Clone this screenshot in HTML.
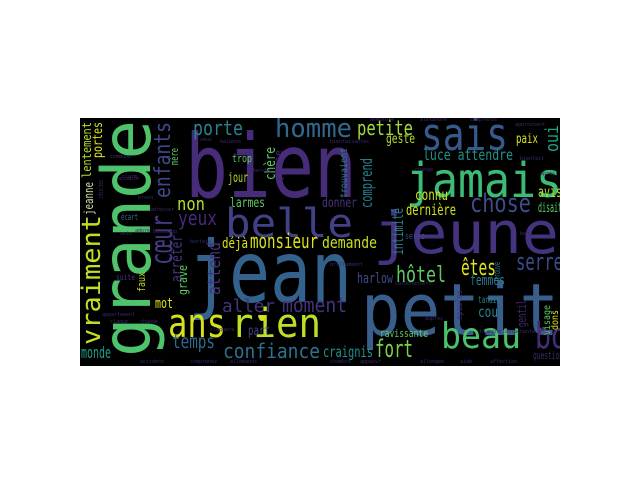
<!DOCTYPE html>
<html><head><meta charset="utf-8"><style>
html,body{margin:0;padding:0;background:#fff;width:640px;height:480px;overflow:hidden}
svg{display:block}
text{font-family:"DejaVu Sans Mono","Liberation Mono",monospace}
</style></head><body>
<svg width="640" height="480" viewBox="0 0 640 480" xmlns="http://www.w3.org/2000/svg">
<defs><clipPath id="c"><rect x="80" y="118" width="480" height="248"/></clipPath></defs>
<rect x="80" y="118" width="480" height="248" fill="#000"/>
<g clip-path="url(#c)" lengthAdjust="spacingAndGlyphs">
<!-- big horizontal -->
<text x="185" y="197" font-size="88" textLength="172" lengthAdjust="spacingAndGlyphs" fill="#472c7a">bien</text>
<text x="225" y="237" font-size="40" textLength="128" lengthAdjust="spacingAndGlyphs" fill="#424086">belle</text>
<text x="188" y="302" font-size="86" textLength="164" lengthAdjust="spacingAndGlyphs" fill="#33638d">jean</text>
<text x="168" y="337" font-size="40" textLength="58" lengthAdjust="spacingAndGlyphs" fill="#d5e21a">ans</text>
<text x="231" y="337" font-size="40" textLength="90" lengthAdjust="spacingAndGlyphs" fill="#bddf26">rien</text>
<text x="421" y="150" font-size="45" textLength="87" lengthAdjust="spacingAndGlyphs" fill="#38598c">sais</text>
<text x="406" y="197" font-size="48" textLength="156" lengthAdjust="spacingAndGlyphs" fill="#3bbb75">jamais</text>
<text x="373" y="253" font-size="58" textLength="186" lengthAdjust="spacingAndGlyphs" fill="#46337f">jeune</text>
<text x="361" y="335" font-size="72" textLength="198" lengthAdjust="spacingAndGlyphs" fill="#3a5e8c">petit</text>
<text x="441" y="348" font-size="36" textLength="80" lengthAdjust="spacingAndGlyphs" fill="#4ac16d">beau</text>
<text x="535" y="348" font-size="36" textLength="48" lengthAdjust="spacingAndGlyphs" fill="#472c7a">bon</text>
<text x="470" y="212" font-size="26" textLength="61" lengthAdjust="spacingAndGlyphs" fill="#3e4c8a">chose</text>
<text x="516" y="270" font-size="24" textLength="47" lengthAdjust="spacingAndGlyphs" fill="#3e4989">serre</text>
<!-- medium horizontal -->
<text x="193" y="135" font-size="20" textLength="50" lengthAdjust="spacingAndGlyphs" fill="#26828e">porte</text>
<text x="275" y="137" font-size="26" textLength="77" lengthAdjust="spacingAndGlyphs" fill="#31688e">homme</text>
<text x="357" y="135" font-size="20" textLength="56" lengthAdjust="spacingAndGlyphs" fill="#a0da39">petite</text>
<text x="177" y="210" font-size="18" textLength="28" lengthAdjust="spacingAndGlyphs" fill="#b5de2b">non</text>
<text x="178" y="225" font-size="20" textLength="39" lengthAdjust="spacingAndGlyphs" fill="#482878">yeux</text>
<text x="250" y="248" font-size="20" textLength="68" lengthAdjust="spacingAndGlyphs" fill="#d8e219">monsieur</text>
<text x="222" y="248" font-size="14" textLength="26" lengthAdjust="spacingAndGlyphs" fill="#d8e219">déjà</text>
<text x="322" y="248" font-size="16" textLength="55" lengthAdjust="spacingAndGlyphs" fill="#c9e020">demande</text>
<text x="230" y="207" font-size="13" textLength="35" lengthAdjust="spacingAndGlyphs" fill="#5ec962">larmes</text>
<text x="322" y="207" font-size="13" textLength="35" lengthAdjust="spacingAndGlyphs" fill="#46327e">donner</text>
<text x="228" y="182" font-size="13" textLength="20" lengthAdjust="spacingAndGlyphs" fill="#b5de2b">jour</text>
<text x="232" y="162" font-size="11" textLength="20" lengthAdjust="spacingAndGlyphs" fill="#5ec962">trop</text>
<text x="222" y="312" font-size="18" textLength="53" lengthAdjust="spacingAndGlyphs" fill="#46327e">aller</text>
<text x="282" y="312" font-size="20" textLength="65" lengthAdjust="spacingAndGlyphs" fill="#46327e">moment</text>
<text x="172" y="348" font-size="19" textLength="43" lengthAdjust="spacingAndGlyphs" fill="#31688e">temps</text>
<text x="223" y="358" font-size="20" textLength="97" lengthAdjust="spacingAndGlyphs" fill="#2c728e">confiance</text>
<text x="323" y="357" font-size="15" textLength="50" lengthAdjust="spacingAndGlyphs" fill="#21918c">craignis</text>
<text x="375" y="357" font-size="24" textLength="38" lengthAdjust="spacingAndGlyphs" fill="#7ad151">fort</text>
<text x="248" y="335" font-size="13" textLength="22" lengthAdjust="spacingAndGlyphs" fill="#414487">part</text>
<text x="357" y="283" font-size="14" textLength="36" lengthAdjust="spacingAndGlyphs" fill="#3e4a89">harlow</text>
<text x="396" y="282" font-size="22" textLength="50" lengthAdjust="spacingAndGlyphs" fill="#5ec962">hôtel</text>
<text x="155" y="308" font-size="14" textLength="18" lengthAdjust="spacingAndGlyphs" fill="#d8e219">mot</text>
<text x="81" y="358" font-size="16" textLength="30" lengthAdjust="spacingAndGlyphs" fill="#1f9e89">monde</text>
<text x="121" y="220" font-size="9" textLength="17" lengthAdjust="spacingAndGlyphs" fill="#31688e">écart</text>
<text x="116" y="280" font-size="8" textLength="19" lengthAdjust="spacingAndGlyphs" fill="#46327e">suite</text>
<text x="423" y="160" font-size="15" textLength="90" lengthAdjust="spacingAndGlyphs" fill="#21918c">luce attendre</text>
<text x="415" y="200" font-size="15" textLength="33" lengthAdjust="spacingAndGlyphs" fill="#d0e11c">connu</text>
<text x="406" y="215" font-size="15" textLength="50" lengthAdjust="spacingAndGlyphs" fill="#d0e11c">dernière</text>
<text x="461" y="275" font-size="22" textLength="35" lengthAdjust="spacingAndGlyphs" fill="#e2e418">êtes</text>
<text x="470" y="285" font-size="14" textLength="35" lengthAdjust="spacingAndGlyphs" fill="#2a788e">femmes</text>
<text x="478" y="303" font-size="10" textLength="22" lengthAdjust="spacingAndGlyphs" fill="#26828e">tandis</text>
<text x="478" y="317" font-size="15" textLength="20" lengthAdjust="spacingAndGlyphs" fill="#26828e">cou</text>
<text x="380" y="337" font-size="11" textLength="48" lengthAdjust="spacingAndGlyphs" fill="#5ec962">ravissante</text>
<text x="533" y="359" font-size="11" textLength="30" lengthAdjust="spacingAndGlyphs" fill="#3b2a6e">question</text>
<text x="516" y="143" font-size="13" textLength="22" lengthAdjust="spacingAndGlyphs" fill="#d8e219">paix</text>
<text x="386" y="143" font-size="13" textLength="29" lengthAdjust="spacingAndGlyphs" fill="#b5de2b">geste</text>
<text x="538" y="197" font-size="15" textLength="24" lengthAdjust="spacingAndGlyphs" fill="#b5de2b">avis</text>
<text x="538" y="212" font-size="13" textLength="24" lengthAdjust="spacingAndGlyphs" fill="#5ec962">disait</text>
<text x="405" y="239" font-size="9" textLength="20" lengthAdjust="spacingAndGlyphs" fill="#3e4a89">serez</text>
<!-- vertical -->
<text transform="translate(150,357) rotate(-90)" font-size="68" textLength="237" lengthAdjust="spacingAndGlyphs" fill="#4ec36b">grande</text>
<text transform="translate(100,345) rotate(-90)" font-size="26" textLength="130" lengthAdjust="spacingAndGlyphs" fill="#c2df23">vraiment</text>
<text transform="translate(93,215) rotate(-90)" font-size="12" textLength="33" lengthAdjust="spacingAndGlyphs" fill="#c8e0a0">jeanne</text>
<text transform="translate(91,178) rotate(-90)" font-size="12" textLength="56" lengthAdjust="spacingAndGlyphs" fill="#b5de2b">lentement</text>
<text transform="translate(102,158) rotate(-90)" font-size="13" textLength="36" lengthAdjust="spacingAndGlyphs" fill="#d8e219">portes</text>
<text transform="translate(103,198) rotate(-90)" font-size="7" textLength="18" lengthAdjust="spacingAndGlyphs" fill="#482878">récoltes</text>
<text transform="translate(170,198) rotate(-90)" font-size="22" textLength="76" lengthAdjust="spacingAndGlyphs" fill="#3f4788">enfants</text>
<text transform="translate(172,265) rotate(-90)" font-size="30" textLength="50" lengthAdjust="spacingAndGlyphs" fill="#443983">cœur</text>
<text transform="translate(182,282) rotate(-90)" font-size="16" textLength="47" lengthAdjust="spacingAndGlyphs" fill="#46327e">arrêter</text>
<text transform="translate(187,295) rotate(-90)" font-size="12" textLength="30" lengthAdjust="spacingAndGlyphs" fill="#5ec962">grave</text>
<text transform="translate(145,292) rotate(-90)" font-size="11" textLength="20" lengthAdjust="spacingAndGlyphs" fill="#b5de2b">faux</text>
<text transform="translate(220,295) rotate(-90)" font-size="18" textLength="53" lengthAdjust="spacingAndGlyphs" fill="#46327e">attend</text>
<text transform="translate(178,165) rotate(-90)" font-size="11" textLength="17" lengthAdjust="spacingAndGlyphs" fill="#5ec962">mère</text>
<text transform="translate(275,180) rotate(-90)" font-size="14" textLength="33" lengthAdjust="spacingAndGlyphs" fill="#5ec962">chère</text>
<text transform="translate(282,180) rotate(-90)" font-size="11" textLength="30" lengthAdjust="spacingAndGlyphs" fill="#482878">passe</text>
<text transform="translate(372,208) rotate(-90)" font-size="16" textLength="50" lengthAdjust="spacingAndGlyphs" fill="#26828e">comprend</text>
<text transform="translate(347,198) rotate(-90)" font-size="10" textLength="50" lengthAdjust="spacingAndGlyphs" fill="#26828e">trouvaient</text>
<text transform="translate(403,255) rotate(-90)" font-size="15" textLength="47" lengthAdjust="spacingAndGlyphs" fill="#26828e">intimité</text>
<text transform="translate(462,320) rotate(-90)" font-size="9" textLength="30" lengthAdjust="spacingAndGlyphs" fill="#46327e">épaules</text>
<text transform="translate(500,280) rotate(-90)" font-size="9" textLength="18" lengthAdjust="spacingAndGlyphs" fill="#26828e">trouvé</text>
<text transform="translate(558,152) rotate(-90)" font-size="18" textLength="27" lengthAdjust="spacingAndGlyphs" fill="#20a486">oui</text>
<text transform="translate(526,327) rotate(-90)" font-size="12" textLength="27" lengthAdjust="spacingAndGlyphs" fill="#482878">gentil</text>
<text transform="translate(550,335) rotate(-90)" font-size="10" textLength="30" lengthAdjust="spacingAndGlyphs" fill="#5ec962">visage</text>
<text transform="translate(558,330) rotate(-90)" font-size="10" textLength="20" lengthAdjust="spacingAndGlyphs" fill="#d8e219">dons</text>
<!-- tiny filler -->
<g font-size="5" fill="#3b2a6e">
<text x="110" y="158">commune</text><text x="122" y="178">clarm</text><text x="118" y="180">accepté</text>
<text x="138" y="199">bravo</text><text x="150" y="211">adresser</text><text x="153" y="233">beaucoup</text>
<text x="120" y="235">avis</text><text x="135" y="232">adoré</text><text x="190" y="243">battais</text>
<text x="102" y="316">appartement</text><text x="110" y="323">claque</text><text x="140" y="323">chaude</text>
<text x="140" y="363">accident</text><text x="190" y="363">comprenez</text><text x="230" y="363">allemands</text>
<text x="210" y="331">claquera</text><text x="200" y="141">veux</text><text x="220" y="143">balance</text>
<text x="250" y="172">cherche</text><text x="233" y="156">adopté</text><text x="330" y="143">bienfaisantes</text>
<text x="415" y="171">changé</text><text x="330" y="266">brillamment</text><text x="395" y="285">carbonaniers</text>
<text x="425" y="320">auprès</text><text x="480" y="333">blanche</text><text x="505" y="333">attachante</text>
<text x="330" y="363">chambre</text><text x="360" y="363">appauvr</text><text x="420" y="363">allongée</text>
<text x="460" y="363">aide</text><text x="490" y="363">affection</text><text x="370" y="121">aventure</text>
<text x="420" y="121">alexandre</text><text x="470" y="121">comprends</text><text x="515" y="126">approchent</text>
<text x="520" y="160">bienfait</text><text x="540" y="175">après</text><text x="520" y="235">baby</text>
</g>
<circle cx="262" cy="318" r="3" fill="#d8e219"/>
</g>
</svg>
</body></html>
